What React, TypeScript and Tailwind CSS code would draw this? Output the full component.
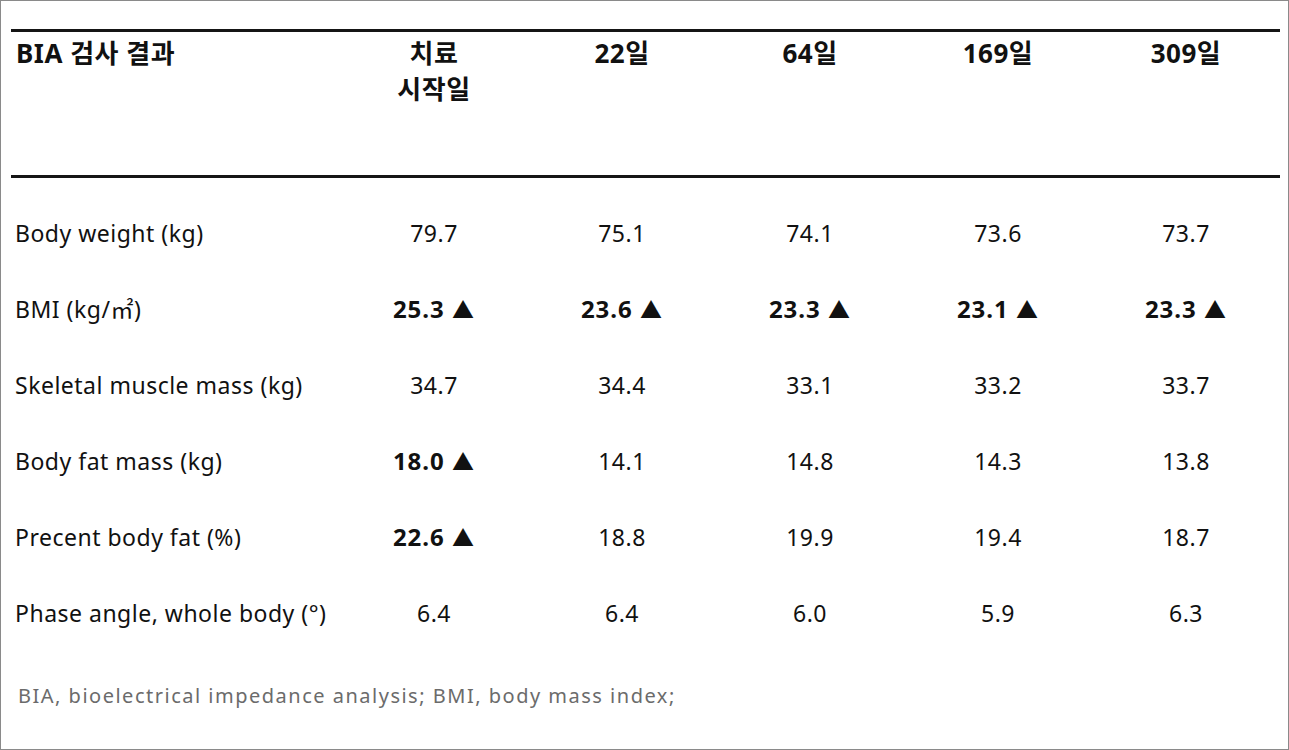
// BIA result table — five visits, bold values flagged with ▲

const FONT = "font-['Noto_Sans','Noto_Sans_CJK_KR',sans-serif]";

type Cell = { v: string; up?: boolean };

const rows: { label: string; cells: Cell[] }[] = [
  { label: 'Body weight (kg)', cells: [{ v: '79.7' }, { v: '75.1' }, { v: '74.1' }, { v: '73.6' }, { v: '73.7' }] },
  { label: 'BMI (kg/㎡)', cells: [{ v: '25.3', up: true }, { v: '23.6', up: true }, { v: '23.3', up: true }, { v: '23.1', up: true }, { v: '23.3', up: true }] },
  { label: 'Skeletal muscle mass (kg)', cells: [{ v: '34.7' }, { v: '34.4' }, { v: '33.1' }, { v: '33.2' }, { v: '33.7' }] },
  { label: 'Body fat mass (kg)', cells: [{ v: '18.0', up: true }, { v: '14.1' }, { v: '14.8' }, { v: '14.3' }, { v: '13.8' }] },
  { label: 'Precent body fat (%)', cells: [{ v: '22.6', up: true }, { v: '18.8' }, { v: '19.9' }, { v: '19.4' }, { v: '18.7' }] },
  { label: 'Phase angle, whole body (°)', cells: [{ v: '6.4' }, { v: '6.4' }, { v: '6.0' }, { v: '5.9' }, { v: '6.3' }] },
];

const heads = [['치료', '시작일'], ['22일'], ['64일'], ['169일'], ['309일']];

export default function App() {
  return (
    <div className={`w-[1289px] h-[750px] bg-white border border-[#8a8a8a] text-[#111] ${FONT}`}>
      <div className="ml-[10px] mt-[28px] w-[1269px]">
        {/* header */}
        <div className="grid grid-cols-[329px_repeat(5,188px)] h-[149px] border-y-[3px] border-[#151515] pt-[3px] text-[26px] leading-[36px] font-bold tracking-[0.5px]">
          <div className="pl-[5px]">BIA 검사 결과</div>
          {heads.map((h, i) => (
            <div key={i} className="text-center">
              {h.map(line => <div key={line}>{line}</div>)}
            </div>
          ))}
        </div>

        {/* body */}
        <div className="pt-[17px]">
          {rows.map(r => (
            <div key={r.label} className="grid grid-cols-[329px_repeat(5,188px)] h-[76px] items-center text-[23px] tracking-[0.5px]">
              <div className="pl-[4px]">{r.label}</div>
              {r.cells.map((c, i) => (
                <div key={i} className={`text-center ${c.up ? 'font-bold text-[24px] tracking-[1px]' : ''}`}>
                  {c.up ? <>{c.v} <span className="text-[22px]">▲</span></> : c.v}
                </div>
              ))}
            </div>
          ))}
        </div>

        <div className="mt-[30px] pl-[7px] text-[20px] tracking-[1.5px] text-[#6b6b6b]">
          BIA, bioelectrical impedance analysis; BMI, body mass index;
        </div>
      </div>
    </div>
  );
}
